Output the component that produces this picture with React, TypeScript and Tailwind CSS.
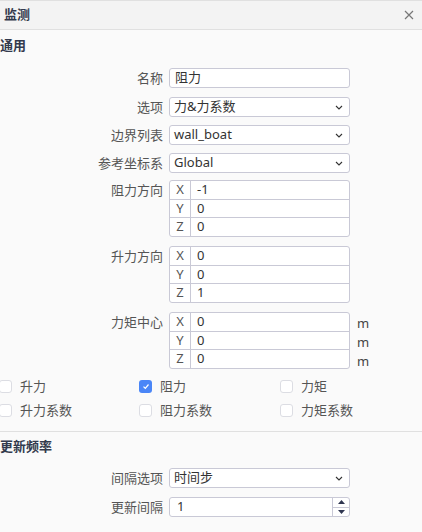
import React from 'react';

const font = { fontFamily: '"Noto Sans", "Noto Sans CJK SC", sans-serif' };

const Chevron = () => (
  <svg width="8" height="5" viewBox="0 0 8 5" className="shrink-0">
    <path d="M1 1l3 3 3-3" fill="none" stroke="#333" strokeWidth="1.1" />
  </svg>
);

const Label = ({ children }: { children: React.ReactNode }) => (
  <div className="w-[163px] shrink-0 text-right text-[13px] leading-[20px] text-[#555]">{children}</div>
);

const TextInput = ({ value }: { value: string }) => (
  <div className="flex h-[20px] w-[181px] items-center rounded-[3px] border border-[#c9c9d6] bg-white px-[5px] text-[13px] text-[#333]">
    {value}
  </div>
);

const SelectInput = ({ value }: { value: string }) => (
  <div className="flex h-[20px] w-[181px] items-center justify-between rounded-[3px] border border-[#c9c9d6] bg-white pl-[4px] pr-[6px] text-[13px] text-[#333]">
    <span>{value}</span>
    <Chevron />
  </div>
);

const Row = ({ label, children, className = '' }: { label: string; children: React.ReactNode; className?: string }) => (
  <div className={`flex items-start gap-[6px] ${className}`}>
    <Label>{label}</Label>
    {children}
  </div>
);

const VectorBox = ({ values, unit }: { values: string[]; unit?: string }) => (
  <div className="flex items-start">
    <div className="w-[181px] overflow-hidden rounded-[3px] border border-[#c9c9d6] bg-white">
      {['X', 'Y', 'Z'].map((axis, i) => (
        <div
          key={axis}
          className={`flex items-center text-[13px] text-[#333] ${i === 0 ? 'h-[18px]' : i === 1 ? 'h-[18px] border-t border-[#c9c9d6]' : 'h-[19px] border-t border-[#c9c9d6]'}`}
        >
          <div className="flex h-full w-[21px] items-center justify-center border-r border-[#c9c9d6] text-[#555]">{axis}</div>
          <div className="pl-[6px]">{values[i]}</div>
        </div>
      ))}
    </div>
    {unit && (
      <div className="ml-[7px] flex flex-col pt-[2px] text-[13px] text-[#444]">
        {values.map((_, i) => (
          <div key={i} className="h-[19px] leading-[19px]">{unit}</div>
        ))}
      </div>
    )}
  </div>
);

const Checkbox = ({ label, checked = false }: { label: string; checked?: boolean }) => (
  <div className="flex h-[13px] items-center gap-[8px]">
    {checked ? (
      <div className="flex h-[13px] w-[13px] items-center justify-center rounded-[3px] bg-[#4a86f7]">
        <svg width="8" height="7" viewBox="0 0 8 7">
          <path d="M1.5 3.6l1.8 1.7 3.2-3.8" fill="none" stroke="white" strokeWidth="1.2" />
        </svg>
      </div>
    ) : (
      <div className="h-[13px] w-[13px] rounded-[3px] border border-[#dcdde3] bg-white" />
    )}
    <span className="text-[13px] leading-[13px] text-[#555]">{label}</span>
  </div>
);

export default function App() {
  return (
    <div className="h-[532px] w-[422px] overflow-hidden bg-[#fafafa]" style={font}>
      <div className="flex h-[30px] items-center justify-between border-t border-b border-[#e0e0e0] bg-[#f3f3f3] pl-[4px] pr-[8px]">
        <span className="text-[13px] font-bold text-[#333a4d]">监测</span>
        <svg width="10" height="10" viewBox="0 0 10 10">
          <path d="M1 1l8 8M9 1l-8 8" stroke="#777" strokeWidth="1.2" />
        </svg>
      </div>

      <div className="mt-[6px] text-[13px] font-bold leading-[18px] text-[#333a4d]">通用</div>

      <div className="mt-[14px] flex flex-col">
        <Row label="名称">
          <TextInput value="阻力" />
        </Row>
        <Row label="选项" className="mt-[9px]">
          <SelectInput value="力&力系数" />
        </Row>
        <Row label="边界列表" className="mt-[8px]">
          <SelectInput value="wall_boat" />
        </Row>
        <Row label="参考坐标系" className="mt-[8px]">
          <SelectInput value="Global" />
        </Row>
        <Row label="阻力方向" className="mt-[7px]">
          <VectorBox values={['-1', '0', '0']} />
        </Row>
        <Row label="升力方向" className="mt-[9px]">
          <VectorBox values={['0', '0', '1']} />
        </Row>
        <Row label="力矩中心" className="mt-[9px]">
          <VectorBox values={['0', '0', '0']} unit="m" />
        </Row>
      </div>

      <div className="ml-[-1px] mt-[9px] grid grid-cols-[140px_141px_140px] gap-y-[11px]">
        <Checkbox label="升力" />
        <Checkbox label="阻力" checked />
        <Checkbox label="力矩" />
        <Checkbox label="升力系数" />
        <Checkbox label="阻力系数" />
        <Checkbox label="力矩系数" />
      </div>

      <div className="mt-[14px] border-t border-[#e0e0e0]" />
      <div className="mt-[5px] text-[13px] font-bold leading-[18px] text-[#333a4d]">更新频率</div>

      <div className="mt-[13px] flex flex-col">
        <Row label="间隔选项">
          <SelectInput value="时间步" />
        </Row>
        <Row label="更新间隔" className="mt-[9px]">
          <div className="flex h-[20px] w-[181px] items-stretch rounded-[3px] border border-[#c9c9d6] bg-white text-[13px] text-[#333]">
            <div className="flex flex-1 items-center pl-[7px]">1</div>
            <div className="flex w-[17px] flex-col border-l border-[#c9c9d6]">
              <div className="flex flex-1 items-center justify-center border-b border-[#c9c9d6]">
                <svg width="7" height="4" viewBox="0 0 7 4"><path d="M3.5 0L7 4H0z" fill="#2f3650" /></svg>
              </div>
              <div className="flex flex-1 items-center justify-center">
                <svg width="7" height="4" viewBox="0 0 7 4"><path d="M0 0h7L3.5 4z" fill="#2f3650" /></svg>
              </div>
            </div>
          </div>
        </Row>
      </div>
    </div>
  );
}
